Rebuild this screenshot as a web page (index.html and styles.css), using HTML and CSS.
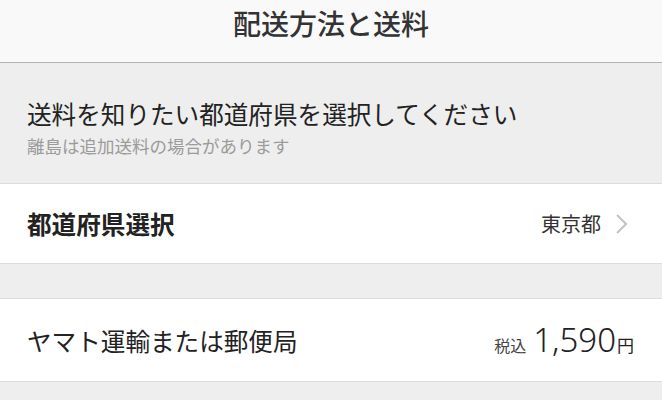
FILE: index.html
```html
<!DOCTYPE html>
<html lang="ja">
<head>
    <meta charset="UTF-8">
    <meta name="viewport" content="width=device-width, initial-scale=1.0">
    <title>配送方法と送料</title>
    <link rel="stylesheet" href="styles.css">
</head>
<body>
    <header class="navbar">
        <h1>配送方法と送料</h1>
    </header>

    <section class="intro">
        <p class="intro-title">送料を知りたい都道府県を選択してください</p>
        <p class="intro-note">離島は追加送料の場合があります</p>
    </section>

    <div class="row pref-row">
        <span class="row-label bold">都道府県選択</span>
        <span class="pref-value">
            東京都
            <svg class="chevron" width="13" height="22" viewBox="0 0 13 22">
                <path d="M2 2 L11 11 L2 20" fill="none" stroke="#c4c4c4" stroke-width="2.2"/>
            </svg>
        </span>
    </div>

    <div class="spacer"></div>

    <div class="row carrier-row">
        <span class="row-label">ヤマト運輸または郵便局</span>
        <span class="price">
            <span class="tax">税込</span>
            <span class="amount">1,590</span><span class="yen">円</span>
        </span>
    </div>

    <div class="rest"></div>
</body>
</html>
```

FILE: styles.css
```css
body, html {
    margin: 0;
    padding: 0;
    background-color: #eeeeee;
    color: #222;
    font-family: "Noto Sans CJK JP", "Noto Sans", sans-serif;
}

.navbar {
    height: 62px;
    background-color: #f9f9f9;
    border-bottom: 1px solid #b3b3b3;
    display: flex;
    align-items: center;
    justify-content: center;
}

.navbar h1 {
    margin: 0 0 16px 0;
    font-size: 28px;
    font-weight: 500;
    color: #333;
    line-height: 1;
}

.intro {
    height: 120px;
    padding: 0 27px;
    border-bottom: 1px solid #dcdcdc;
    display: flex;
    flex-direction: column;
    justify-content: center;
}

.intro p {
    margin: 0;
}

.intro-title {
    font-size: 24.6px;
    line-height: 1;
    color: #222;
    margin-top: 10px !important;
}

.intro-note {
    font-size: 17.5px;
    line-height: 1;
    color: #9b9b9b;
    margin-top: 11px !important;
}

.row {
    background-color: #fff;
    display: flex;
    align-items: center;
    justify-content: space-between;
    padding: 0 28px 0 27px;
    border-bottom: 1px solid #dcdcdc;
}

.pref-row {
    height: 79px;
}

.carrier-row {
    height: 82px;
    border-top: 1px solid #dcdcdc;
}

.row-label {
    font-size: 24.6px;
    line-height: 1;
    color: #222;
}

.bold {
    font-weight: bold;
}

.pref-value {
    display: flex;
    align-items: center;
    font-size: 20px;
    color: #333;
}

.chevron {
    margin-left: 14px;
    margin-right: 6px;
}

.spacer {
    height: 34px;
}

.price {
    display: flex;
    align-items: baseline;
    color: #222;
}

.tax {
    font-size: 16px;
    color: #444;
    margin-right: 7px;
}

.amount {
    font-family: "Noto Sans", sans-serif;
    font-size: 33px;
    font-weight: 300;
    line-height: 1;
}

.yen {
    font-size: 17px;
    margin-left: 1px;
}

.rest {
    height: 40px;
}
```
